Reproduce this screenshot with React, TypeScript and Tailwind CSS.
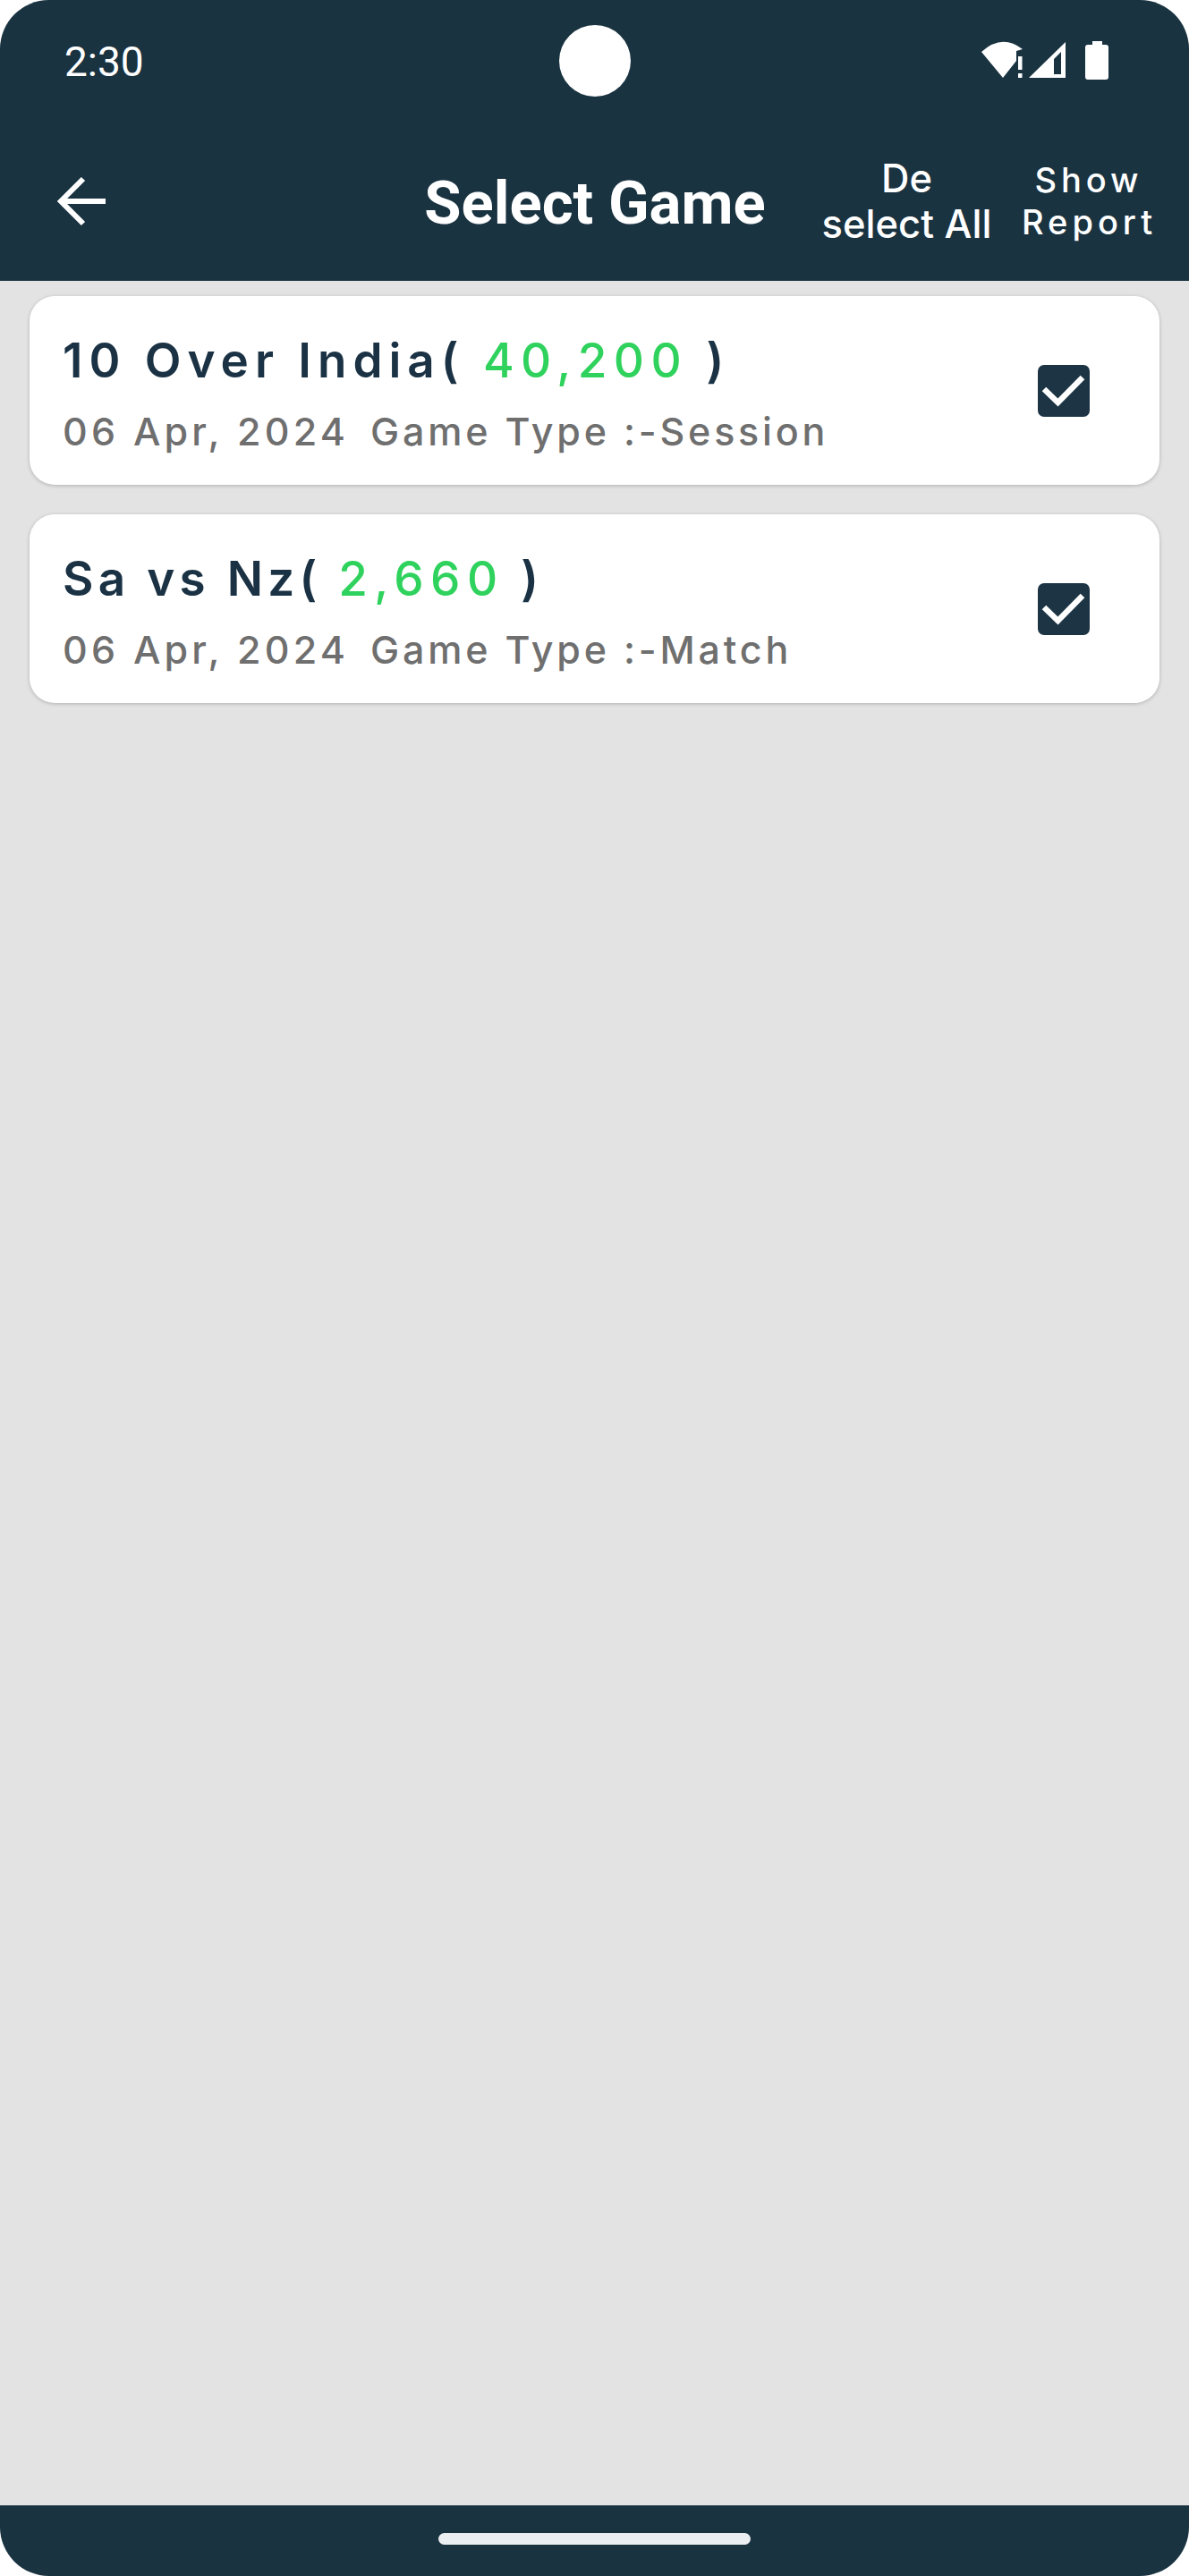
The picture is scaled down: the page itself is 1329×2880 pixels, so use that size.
const games = [
  {
    name: "10 Over India(",
    amount: "40,200",
    type: "Session",
    titleClass: "tracking-[7px]",
  },
  {
    name: "Sa vs Nz(",
    amount: "2,660",
    type: "Match",
    titleClass: "tracking-[5.3px]",
  },
];

function StatusIcons() {
  return (
    <svg width="148" height="48" viewBox="1095 44 148 48" fill="#fff">
      <path d="M1097 58 L1121 87 L1136 68 V57 L1143 55 Q1120 37 1097 58 Z" />
      <rect x="1138" y="63" width="4.5" height="15" />
      <rect x="1138" y="82" width="4.5" height="5" />
      <path
        fillRule="evenodd"
        d="M1150 87 L1191 47 V87 Z M1178 83 H1186 V58 L1178 66 Z"
      />
      <path d="M1221 46 H1232 V50 H1236 Q1239 50 1239 53 V86 Q1239 89 1236 89 H1216 Q1213 89 1213 86 V53 Q1213 50 1216 50 H1221 Z" />
    </svg>
  );
}

function Checkbox() {
  return (
    <div className="w-[58px] h-[58px] rounded-[7px] bg-[#1d3445] shrink-0">
      <svg width="58" height="58" viewBox="0 0 58 58" fill="none">
        <path d="M7 27 L22.5 42 L50 14" stroke="#fff" strokeWidth="6.5" />
      </svg>
    </div>
  );
}

function GameCard({ game }: { game: (typeof games)[number] }) {
  return (
    <div className="h-[211px] rounded-[28px] bg-white shadow-[0_1px_4px_rgba(0,0,0,0.22)] flex items-center pl-[37px] pr-[78px]">
      <div className="flex-1 min-w-0 pt-[5px] font-['Inter',sans-serif]">
        <div
          className={`text-[53px] leading-[64px] font-semibold text-[#1a3244] whitespace-nowrap ${game.titleClass}`}
        >
          {game.name}{" "}
          <span className="font-medium tracking-[7.4px] text-[#2fd25c]">{game.amount}</span> )
        </div>
        <div className="mt-[21px] flex gap-[24px] text-[43px] leading-[52px] font-medium text-[#6f6f6f] whitespace-nowrap">
          <span className="tracking-[4.2px]">06 Apr, 2024</span>
          <span className="tracking-[3.8px]">Game Type :-{game.type}</span>
        </div>
      </div>
      <Checkbox />
    </div>
  );
}

export default function App() {
  return (
    <div className="w-[1329px] h-[2880px] bg-white">
      <div className="relative h-full rounded-[55px] overflow-hidden bg-[#e3e3e3] flex flex-col">
        <header className="bg-[#1a3341] h-[314px] shrink-0 text-white">
          <div className="h-[140px] flex justify-between pl-[72px] pr-[86px] pt-[44px]">
            <span className="font-['Roboto',sans-serif] text-[46px] leading-[50px] font-normal">2:30</span>
            <StatusIcons />
          </div>
          <div className="flex items-center h-[174px] pb-[4px]">
            <div className="w-[460px] pl-[62px]">
              <svg width="58" height="56" viewBox="0 0 58 56" fill="none" stroke="#fff" strokeWidth="6">
                <path d="M56 28 H6" />
                <path d="M31 3 L6 28 L31 53" />
              </svg>
            </div>
            <h1 className="w-[410px] mt-[4px] text-center font-['Roboto',sans-serif] font-bold text-[67px] leading-[80px]">
              Select Game
            </h1>
            <div className="ml-[48px] w-[191px] text-center font-['Inter',sans-serif] font-medium text-[43.5px] leading-[51px] whitespace-nowrap">
              De
              <br />
              select All
            </div>
            <div className="ml-[33px] w-[150px] text-center font-['Inter',sans-serif] font-medium text-[38px] leading-[47px] tracking-[5px] whitespace-nowrap">
              Show
              <br />
              Report
            </div>
          </div>
        </header>

        <main className="flex-1 px-[33px] pt-[17px] flex flex-col gap-[33px]">
          {games.map((g) => (
            <GameCard key={g.name} game={g} />
          ))}
        </main>

        <footer className="h-[79px] bg-[#1a3341] shrink-0 flex justify-center pt-[31px]">
          <div className="w-[349px] h-[13px] rounded-full bg-[#eceff1]" />
        </footer>

        {/* camera cutout */}
        <div className="absolute left-[625px] top-[28px] w-[80px] h-[80px] rounded-full bg-white" />
      </div>
    </div>
  );
}
